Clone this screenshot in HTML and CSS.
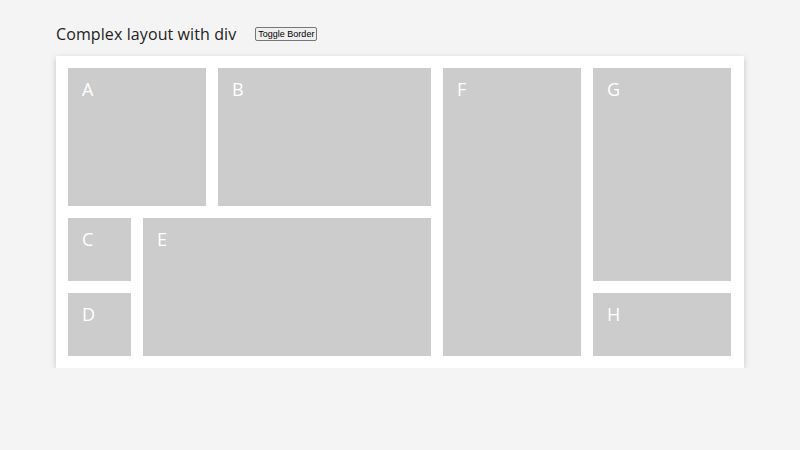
FILE: index.html
```html
<!DOCTYPE html>
<html>
<head>
<meta charset="utf-8">
<link rel="stylesheet" href="styles.css">
</head>
<body>
<div class="page">
  <div class="header">
    <h1 class="title">Complex layout with div</h1>
    <button class="toggle">Toggle Border</button>
  </div>
  <div class="board">
    <div class="cell a">A</div>
    <div class="cell b">B</div>
    <div class="cell f">F</div>
    <div class="cell g">G</div>
    <div class="cell c">C</div>
    <div class="cell e">E</div>
    <div class="cell d">D</div>
    <div class="cell h">H</div>
  </div>
</div>
</body>
</html>
```
FILE: styles.css
```css
html, body {
  margin: 0;
  padding: 0;
  background: #f4f4f4;
}
.page {
  padding: 20px 56px 0;
  font-family: "Open Sans", "DejaVu Sans", sans-serif;
}
.header {
  display: flex;
  align-items: center;
  height: 28px;
  gap: 19px;
}
.title {
  margin: 0;
  font-size: 16px;
  font-weight: 400;
  color: #222;
  letter-spacing: 0.1px;
}
.toggle {
  font-family: "Liberation Sans", Arial, sans-serif;
  font-size: 9px;
  height: 14px;
  padding: 0 2px;
  border: 1px solid #767676;
  border-radius: 2px;
  background: #efefef;
  color: #000;
  line-height: 12px;
}
.board {
  margin-top: 8px;
  width: 688px;
  box-sizing: border-box;
  background: #fff;
  padding: 12px;
  display: grid;
  grid-template-columns: repeat(9, 63px);
  grid-template-rows: repeat(4, 63px);
  gap: 12px;
  box-shadow: 0 2px 6px rgba(0,0,0,0.2);
}
.cell {
  background: #cccccc;
  color: #fff;
  font-size: 18px;
  line-height: 22px;
  padding: 10px 14px;
}
.a { grid-column: 1 / 3; grid-row: 1 / 3; }
.b { grid-column: 3 / 6; grid-row: 1 / 3; }
.f { grid-column: 6 / 8; grid-row: 1 / 5; }
.g { grid-column: 8 / 10; grid-row: 1 / 4; }
.c { grid-column: 1 / 2; grid-row: 3 / 4; }
.e { grid-column: 2 / 6; grid-row: 3 / 5; }
.d { grid-column: 1 / 2; grid-row: 4 / 5; }
.h { grid-column: 8 / 10; grid-row: 4 / 5; }
```
